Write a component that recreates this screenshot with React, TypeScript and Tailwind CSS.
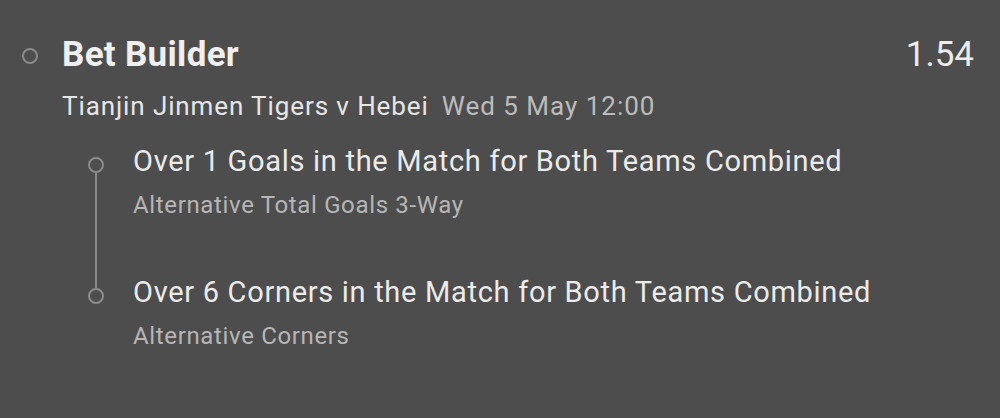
import React from 'react';

const legs = [
  { title: 'Over 1 Goals in the Match for Both Teams Combined', market: 'Alternative Total Goals 3-Way' },
  { title: 'Over 6 Corners in the Match for Both Teams Combined', market: 'Alternative Corners' },
];

export default function App() {
  return (
    <div className="w-[1000px] h-[418px] bg-[#4d4d4d] font-['Roboto',sans-serif] pl-[22px] pr-[26px] pt-[35px]">
      {/* Header */}
      <div className="flex items-start">
        <div className="mt-[13px] w-[16px] h-[16px] shrink-0 rounded-full border-2 border-[#8a8a8a]" />
        <span className="ml-[24px] text-[35px] font-bold leading-[40px] tracking-[0.3px] text-[#efefef]">Bet Builder</span>
        <span className="ml-auto text-[35px] leading-[40px] text-[#ececec]">1.54</span>
      </div>
      <div className="ml-[40px] mt-[16px] flex items-baseline gap-[13px] text-[26px] leading-[30px]">
        <span className="tracking-[0.9px] text-[#e6e6e6]">Tianjin Jinmen Tigers v Hebei</span>
        <span className="tracking-[1px] text-[#bcbcbc]">Wed 5 May 12:00</span>
      </div>

      {/* Legs */}
      <div className="ml-[66px] mt-[23px] flex flex-col">
        {legs.map((leg, i) => {
          const first = i === 0;
          const last = i === legs.length - 1;
          return (
            <div key={i} className="flex">
              <div className="w-[16px] flex flex-col items-center">
                <div className={`w-[2px] h-[13px] ${first ? '' : 'bg-[#8a8a8a]'}`} />
                <div className="w-[16px] h-[16px] rounded-full border-2 border-[#8a8a8a]" />
                <div className={`w-[2px] flex-1 ${last ? '' : 'bg-[#8a8a8a]'}`} />
              </div>
              <div className={`ml-[29px] ${last ? '' : 'pb-[56px]'}`}>
                <div className="text-[29px] leading-[34px] tracking-[0.7px] text-[#ebebeb]">{leg.title}</div>
                <div className="mt-[13px] text-[24px] leading-[28px] tracking-[0.65px] text-[#b6b6b6]">{leg.market}</div>
              </div>
            </div>
          );
        })}
      </div>
    </div>
  );
}
